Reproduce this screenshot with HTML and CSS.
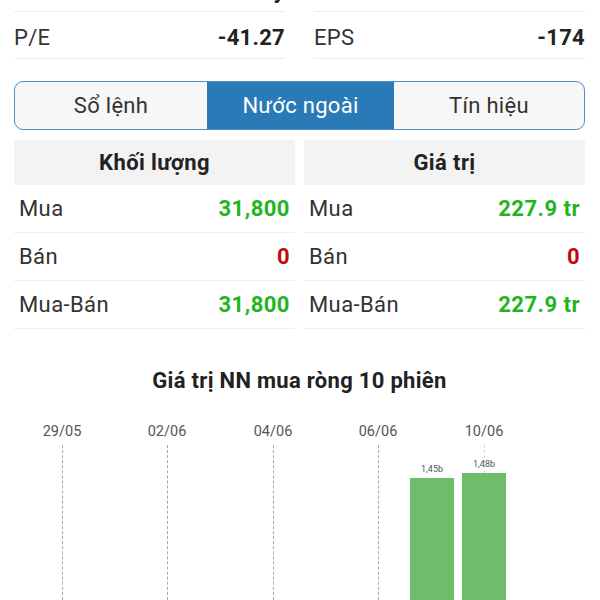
FILE: index.html
```html
<!DOCTYPE html>
<html lang="vi">
<head>
<meta charset="utf-8">
<title>Nước ngoài</title>
<link rel="stylesheet" href="styles.css">
</head>
<body>
<div class="page">
  <div class="stats">
    <div class="stat"><span class="stat-label">Vốn hóa</span><span class="stat-value">72 tỷ</span></div>
    <div class="stat"><span class="stat-label">Beta</span><span class="stat-value">1.12</span></div>
    <div class="stat"><span class="stat-label">P/E</span><span class="stat-value">-41.27</span></div>
    <div class="stat"><span class="stat-label">EPS</span><span class="stat-value">-174</span></div>
  </div>

  <div class="tabs">
    <div class="tab">Sổ lệnh</div>
    <div class="tab active">Nước ngoài</div>
    <div class="tab">Tín hiệu</div>
  </div>

  <div class="tables">
    <div class="table">
      <div class="thead">Khối lượng</div>
      <div class="trow"><span class="tlabel">Mua</span><span class="tval up">31,800</span></div>
      <div class="trow"><span class="tlabel">Bán</span><span class="tval down">0</span></div>
      <div class="trow"><span class="tlabel">Mua-Bán</span><span class="tval up">31,800</span></div>
    </div>
    <div class="table">
      <div class="thead">Giá trị</div>
      <div class="trow"><span class="tlabel">Mua</span><span class="tval up">227.9 tr</span></div>
      <div class="trow"><span class="tlabel">Bán</span><span class="tval down">0</span></div>
      <div class="trow"><span class="tlabel">Mua-Bán</span><span class="tval up">227.9 tr</span></div>
    </div>
  </div>

  <div class="chart-title">Giá trị NN mua ròng 10 phiên</div>
</div>

<div class="chart">
  <div class="date" style="left:62px">29/05</div>
  <div class="date" style="left:167px">02/06</div>
  <div class="date" style="left:273px">04/06</div>
  <div class="date" style="left:378px">06/06</div>
  <div class="date" style="left:484px">10/06</div>

  <div class="grid-line" style="left:62px"></div>
  <div class="grid-line" style="left:167px"></div>
  <div class="grid-line" style="left:273px"></div>
  <div class="grid-line" style="left:378px"></div>
  <div class="grid-line faint" style="left:484px"></div>

  <div class="bar" style="left:410px; top:68px"><span class="bar-label">1,45b</span></div>
  <div class="bar" style="left:462px; top:63px"><span class="bar-label">1,48b</span></div>
</div>
</body>
</html>
```
FILE: styles.css
```css
* { box-sizing: border-box; }

html, body {
  margin: 0;
  padding: 0;
  background: #ffffff;
  overflow: hidden;
}

body {
  font-family: Roboto, "Noto Sans", "Liberation Sans", sans-serif;
  color: #222;
}

.page {
  padding: 0 15px 0 14px;
}

.stats {
  display: grid;
  grid-template-columns: 271px 271px;
  column-gap: 29px;
  margin-top: -35px;
}

.stat {
  display: flex;
  justify-content: space-between;
  align-items: center;
  height: 47px;
  padding-top: 4px;
  border-bottom: 1px solid #ececec;
  font-size: 22px;
  letter-spacing: 0.3px;
}

.stat-label {
  color: #333;
}

.stat-value {
  font-weight: 700;
  color: #222;
}

.tabs {
  display: grid;
  grid-template-columns: 192px 187px 1fr;
  height: 49px;
  margin-top: 22px;
  border: 1.5px solid #4f8ec6;
  border-radius: 9px;
  overflow: hidden;
  background: #f7f7f7;
}

.tab {
  display: flex;
  align-items: center;
  justify-content: center;
  font-size: 22px;
  letter-spacing: 0.3px;
  color: #333;
}

.tab.active {
  background: #2a7ab8;
  color: #ffffff;
}

.tables {
  display: grid;
  grid-template-columns: 281px 281px;
  column-gap: 9px;
  margin-top: 10px;
}

.thead {
  height: 45px;
  display: flex;
  align-items: center;
  justify-content: center;
  background: #f3f3f3;
  font-weight: 700;
  font-size: 22px;
  letter-spacing: 0.4px;
  color: #222;
}

.trow {
  display: flex;
  justify-content: space-between;
  align-items: center;
  height: 48px;
  padding: 0 5px;
  border-bottom: 1px solid #efefef;
  font-size: 22px;
  letter-spacing: 0.4px;
}

.tlabel {
  color: #333;
}

.tval {
  font-weight: 700;
  letter-spacing: 0.5px;
}

.tval.up { color: #1fb51f; }
.tval.down { color: #c20a0a; }

.chart-title {
  margin-top: 39px;
  line-height: 26px;
  text-align: center;
  font-weight: 700;
  font-size: 22px;
  letter-spacing: 0.3px;
  color: #222;
}

.chart {
  position: relative;
  height: 200px;
  margin-top: 16px;
}

.date {
  position: absolute;
  top: 12px;
  transform: translateX(-50%);
  font-size: 14.5px;
  line-height: 20px;
  color: #555;
}

.grid-line {
  position: absolute;
  top: 35px;
  bottom: 0;
  width: 0;
  border-left: 1px dashed #a8a8a8;
}

.grid-line.faint {
  border-left-color: #d6d6d6;
}

.bar {
  position: absolute;
  width: 44px;
  bottom: 0;
  background: #6dbd6a;
}

.bar-label {
  position: absolute;
  left: 50%;
  bottom: 100%;
  transform: translateX(-50%);
  margin-bottom: 4px;
  font-size: 9px;
  line-height: 10px;
  color: #555;
  white-space: nowrap;
}
```
